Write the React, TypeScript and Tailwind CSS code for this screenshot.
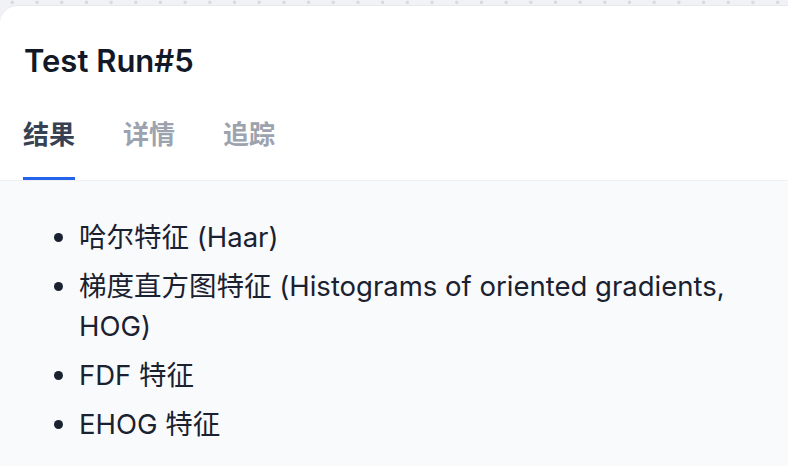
import { useState } from 'react';

const tabs = ['结果', '详情', '追踪'];

const features = [
    '哈尔特征 (Haar)',
    '梯度直方图特征 (Histograms of oriented gradients, HOG)',
    'FDF 特征',
    'EHOG 特征',
];

export default function App() {
    const [active, setActive] = useState(0);

    return (
        <div
            className="flex h-[466px] w-[788px] flex-col overflow-hidden bg-[#f1f2f5] bg-[radial-gradient(circle,#d6d8de_1.3px,transparent_2px)] bg-[length:24.7px_24.7px] bg-[position:0px_-10px] pt-[5px]"
            style={{ fontFamily: 'Inter, "Noto Sans CJK SC", sans-serif' }}
        >
            <div className="flex flex-1 flex-col overflow-hidden rounded-tl-[18px] border-t border-[#e8e9ed] bg-white">
                <div className="px-6 pt-[37px]">
                    <h1 className="text-[31px] leading-9 font-semibold text-[#111827]">Test Run#5</h1>
                    <div className="mt-[38px] -ml-px flex gap-[48px]">
                        {tabs.map((t, i) => (
                            <button
                                key={t}
                                onClick={() => setActive(i)}
                                className={
                                    i === active
                                        ? 'border-b-[3px] border-[#2563eb] pb-[24px] text-[26px] leading-9 font-semibold text-[#374151]'
                                        : 'border-b-[3px] border-transparent pb-[24px] text-[26px] leading-9 font-semibold text-[#9ca3af]'
                                }
                            >
                                {t}
                            </button>
                        ))}
                    </div>
                </div>
                <div className="flex-1 border-t border-[#eef0f3] bg-[#f9fafb] pr-6 pl-[56px] pt-[36px]">
                    <ul className="list-disc space-y-[9px] pl-[23px] text-[27.5px] leading-[40px] text-[#1a2130] marker:text-[#1a2130]">
                        {features.map((f) => (
                            <li key={f}>{f}</li>
                        ))}
                    </ul>
                </div>
            </div>
        </div>
    );
}
